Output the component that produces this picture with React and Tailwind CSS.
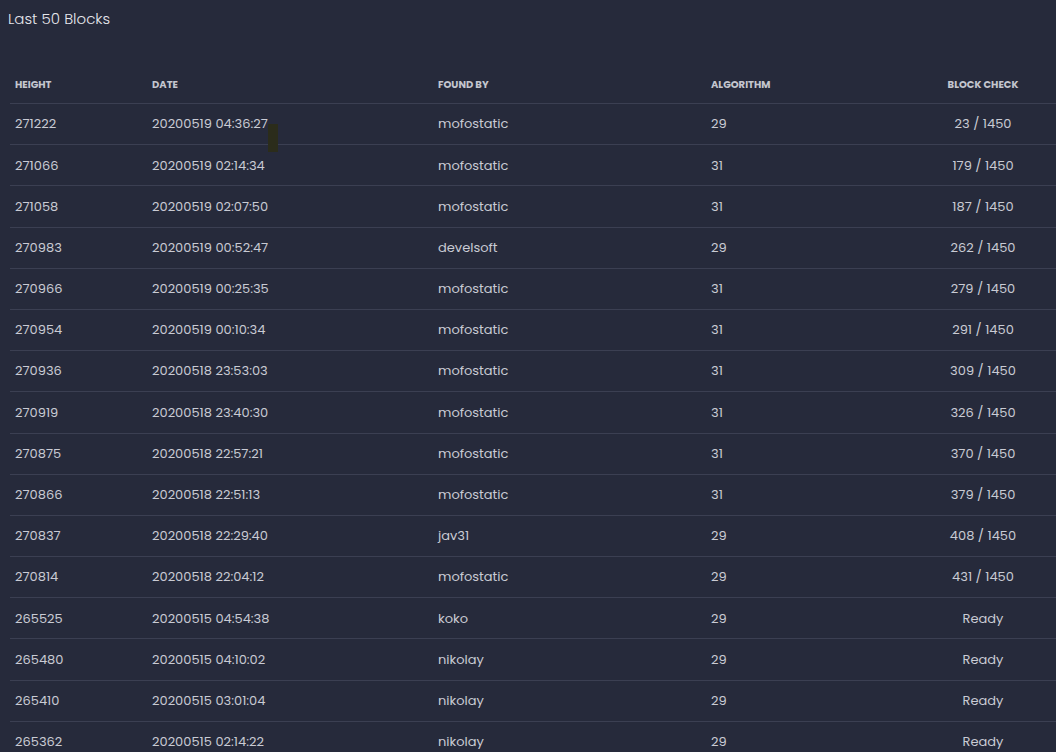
const rows = [
  ['271222', '20200519 04:36:27', 'mofostatic', '29', '23 / 1450'],
  ['271066', '20200519 02:14:34', 'mofostatic', '31', '179 / 1450'],
  ['271058', '20200519 02:07:50', 'mofostatic', '31', '187 / 1450'],
  ['270983', '20200519 00:52:47', 'develsoft', '29', '262 / 1450'],
  ['270966', '20200519 00:25:35', 'mofostatic', '31', '279 / 1450'],
  ['270954', '20200519 00:10:34', 'mofostatic', '31', '291 / 1450'],
  ['270936', '20200518 23:53:03', 'mofostatic', '31', '309 / 1450'],
  ['270919', '20200518 23:40:30', 'mofostatic', '31', '326 / 1450'],
  ['270875', '20200518 22:57:21', 'mofostatic', '31', '370 / 1450'],
  ['270866', '20200518 22:51:13', 'mofostatic', '31', '379 / 1450'],
  ['270837', '20200518 22:29:40', 'jav31', '29', '408 / 1450'],
  ['270814', '20200518 22:04:12', 'mofostatic', '29', '431 / 1450'],
  ['265525', '20200515 04:54:38', 'koko', '29', 'Ready'],
  ['265480', '20200515 04:10:02', 'nikolay', '29', 'Ready'],
  ['265410', '20200515 03:01:04', 'nikolay', '29', 'Ready'],
  ['265362', '20200515 02:14:22', 'nikolay', '29', 'Ready'],
];

const cols = 'grid grid-cols-[137px_286px_273px_204px_146px]';

export default function App() {
  return (
    <div className="relative h-[752px] overflow-hidden bg-[#262a3b] pl-[10px] text-[#c9cbd4]" style={{ fontFamily: 'Poppins, "Noto Sans", sans-serif' }}>
      <h1 className="pt-[9px] text-[15px] font-light leading-[20px] text-[#e6e7ec] -ml-[2px]">Last 50 Blocks</h1>

      <div className={`${cols} mt-[37px] h-[38px] items-center border-b border-[#3b3f52] text-[10px] font-bold uppercase text-[#c4c6cf]`}>
        <div className="pl-[5px]">Height</div>
        <div className="pl-[5px]">Date</div>
        <div className="pl-[5px]">Found by</div>
        <div className="pl-[5px]">Algorithm</div>
        <div className="text-center">Block check</div>
      </div>

      {rows.map((r) => (
        <div key={r[0]} className={`${cols} h-[41.2px] items-center border-b border-[#3b3f52] text-[13px]`}>
          <div className="pl-[5px]">{r[0]}</div>
          <div className="pl-[5px]">{r[1]}</div>
          <div className="pl-[5px]">{r[2]}</div>
          <div className="pl-[5px]">{r[3]}</div>
          <div className="text-center">{r[4]}</div>
        </div>
      ))}

      <div className="absolute left-[268px] top-[124px] h-[28px] w-[10px] bg-[#2b2c1b]" />
    </div>
  );
}
